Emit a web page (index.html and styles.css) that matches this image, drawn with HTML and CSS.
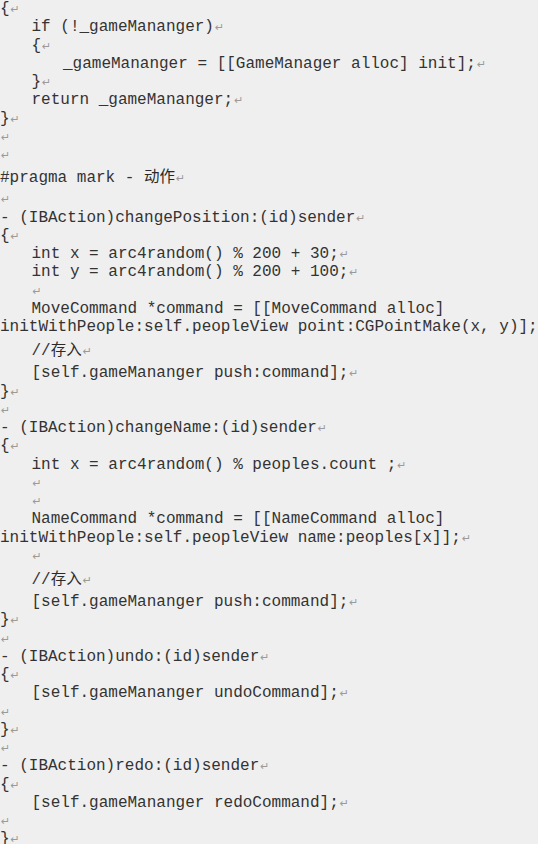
FILE: index.html
```html
<!DOCTYPE html>
<html lang="zh">
<head>
<meta charset="utf-8">
<title>GameManager</title>
<link rel="stylesheet" href="styles.css">
</head>
<body>
<div class="doc">
  <div class="ln">{<span class="pm">↵</span></div>
  <div class="ln i1">if (!_gameMananger)<span class="pm">↵</span></div>
  <div class="ln i1">{<span class="pm">↵</span></div>
  <div class="ln i2">_gameMananger = [[GameManager alloc] init];<span class="pm">↵</span></div>
  <div class="ln i1">}<span class="pm">↵</span></div>
  <div class="ln i1">return _gameMananger;<span class="pm">↵</span></div>
  <div class="ln">}<span class="pm">↵</span></div>
  <div class="ln"><span class="pm">↵</span></div>
  <div class="ln"><span class="pm">↵</span></div>
  <div class="ln pragma">#pragma mark - <span class="cjk">动作</span><span class="pm">↵</span></div>
  <div class="ln"><span class="pm">↵</span></div>
  <div class="ln">- (IBAction)changePosition:(id)sender<span class="pm">↵</span></div>
  <div class="ln">{<span class="pm">↵</span></div>
  <div class="ln i1">int x = arc4random() % 200 + 30;<span class="pm">↵</span></div>
  <div class="ln i1">int y = arc4random() % 200 + 100;<span class="pm">↵</span></div>
  <div class="ln i1"><span class="pm">↵</span></div>
  <div class="ln i1">MoveCommand *command = [[MoveCommand alloc]</div>
  <div class="ln">initWithPeople:self.peopleView point:CGPointMake(x, y)];<span class="pm">↵</span></div>
  <div class="ln i1 cmt">//<span class="cjk">存入</span><span class="pm">↵</span></div>
  <div class="ln i1">[self.gameMananger push:command];<span class="pm">↵</span></div>
  <div class="ln">}<span class="pm">↵</span></div>
  <div class="ln"><span class="pm">↵</span></div>
  <div class="ln">- (IBAction)changeName:(id)sender<span class="pm">↵</span></div>
  <div class="ln">{<span class="pm">↵</span></div>
  <div class="ln i1">int x = arc4random() % peoples.count ;<span class="pm">↵</span></div>
  <div class="ln i1"><span class="pm">↵</span></div>
  <div class="ln i1"><span class="pm">↵</span></div>
  <div class="ln i1">NameCommand *command = [[NameCommand alloc]</div>
  <div class="ln">initWithPeople:self.peopleView name:peoples[x]];<span class="pm">↵</span></div>
  <div class="ln i1"><span class="pm">↵</span></div>
  <div class="ln i1 cmt">//<span class="cjk">存入</span><span class="pm">↵</span></div>
  <div class="ln i1">[self.gameMananger push:command];<span class="pm">↵</span></div>
  <div class="ln">}<span class="pm">↵</span></div>
  <div class="ln"><span class="pm">↵</span></div>
  <div class="ln">- (IBAction)undo:(id)sender<span class="pm">↵</span></div>
  <div class="ln">{<span class="pm">↵</span></div>
  <div class="ln i1">[self.gameMananger undoCommand];<span class="pm">↵</span></div>
  <div class="ln"><span class="pm">↵</span></div>
  <div class="ln">}<span class="pm">↵</span></div>
  <div class="ln"><span class="pm">↵</span></div>
  <div class="ln">- (IBAction)redo:(id)sender<span class="pm">↵</span></div>
  <div class="ln">{<span class="pm">↵</span></div>
  <div class="ln i1">[self.gameMananger redoCommand];<span class="pm">↵</span></div>
  <div class="ln"><span class="pm">↵</span></div>
  <div class="ln">}<span class="pm">↵</span></div>
</div>
</body>
</html>
```

FILE: styles.css
```css
html, body {
  margin: 0;
  padding: 0;
  background: #efefef;
  overflow: hidden;
}

.doc {
  font-family: "Liberation Mono", "Courier New", monospace;
  font-size: 16px;
  line-height: 18.25px;
  color: #333333;
}

.ln {
  height: 18.25px;
  white-space: pre;
}

.i1 {
  padding-left: 31.5px;
}

.i2 {
  padding-left: 63px;
}

.pragma {
  height: 26px;
  padding-top: 5px;
  box-sizing: border-box;
}

.cmt {
  height: 28px;
  padding-top: 6px;
  box-sizing: border-box;
}

.cjk {
  font-family: "Noto Sans CJK SC", sans-serif;
  font-size: 15.5px;
  line-height: 10px;
  color: #2a2a2a;
}

.pm {
  font-family: "DejaVu Sans", sans-serif;
  font-size: 11px;
  line-height: 10px;
  color: #9a9a9a;
  margin-left: 1px;
}
```
